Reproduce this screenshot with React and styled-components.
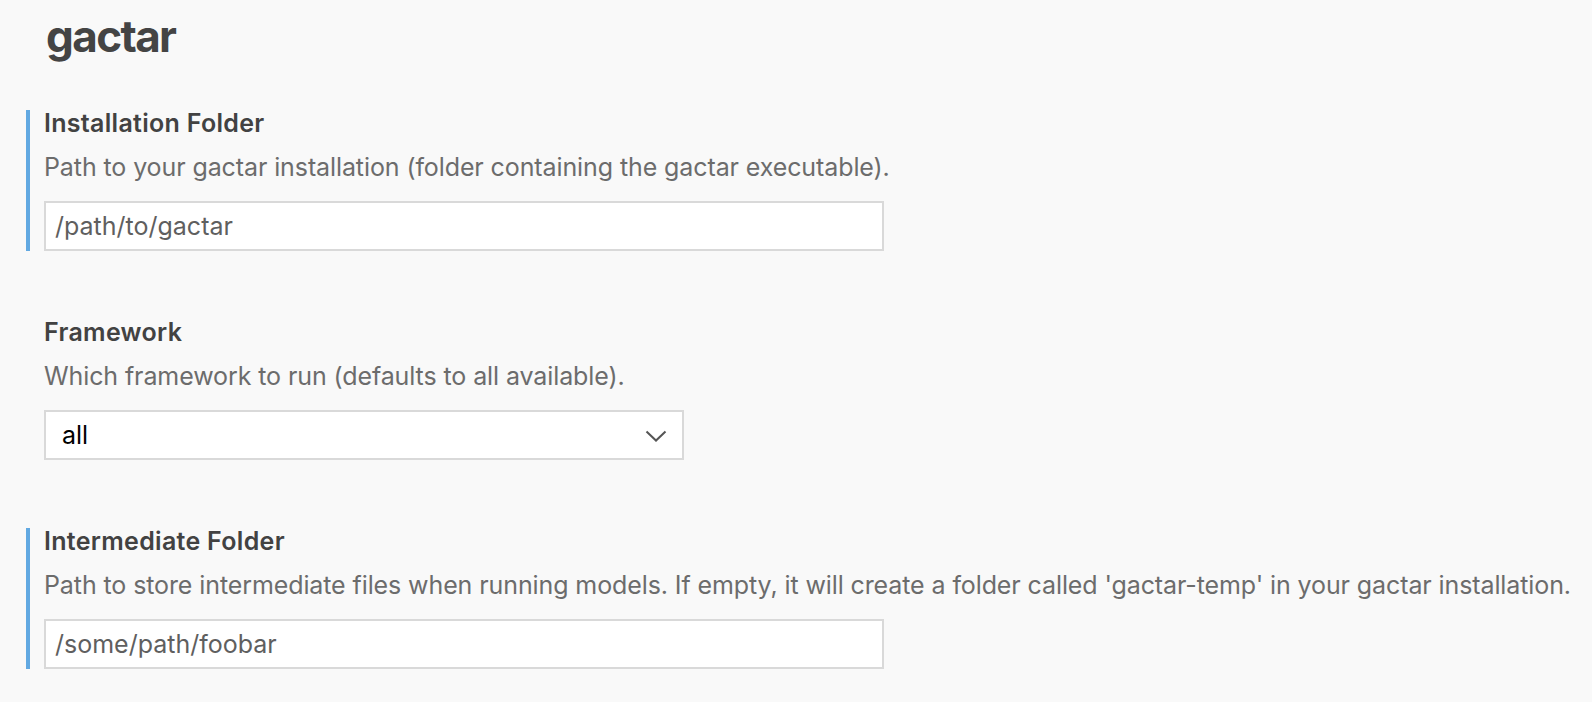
import React from "react";
import styled, { createGlobalStyle } from "styled-components";

const Global = createGlobalStyle`
  html, body { margin: 0; padding: 0; background: #f9f9f9; }
  body { font-family: Inter, "Noto Sans", "Liberation Sans", sans-serif; -webkit-font-smoothing: antialiased; }
  * { box-sizing: border-box; }
`;

const Page = styled.div`
  display: flex;
  flex-direction: column;
  padding: 10px 0 16px 26px;
`;

const Title = styled.h1`
  margin: 0 0 48px 20px;
  font-size: 44px;
  line-height: 52px;
  font-weight: 700;
  color: #444444;
  letter-spacing: -1.6px;
`;

const Setting = styled.section`
  display: flex;
  flex-direction: column;
  align-items: flex-start;
  border-left: 4px solid ${(p) => (p.$modified ? "#62a9e2" : "transparent")};
  padding-left: 14px;

  & + & {
    margin-top: 68px;
  }
`;

const Label = styled.div`
  font-size: 25px;
  line-height: 26px;
  font-weight: 600;
  letter-spacing: 0.3px;
  color: #424242;
`;

const Description = styled.div`
  margin-top: 18px;
  font-size: 25px;
  line-height: 26px;
  font-weight: 400;
  letter-spacing: -0.1px;
  color: #6c6c6c;
`;

const TextInput = styled.input`
  margin-top: 21px;
  width: ${(p) => p.$width}px;
  height: 50px;
  border: 2px solid #d9d9d9;
  background: #ffffff;
  padding: 0 9px;
  font-family: inherit;
  font-size: 25px;
  color: #5f5f5f;
  outline: none;
`;

const SelectWrap = styled.div`
  position: relative;
  margin-top: 21px;
  width: ${(p) => p.$width}px;
  height: 50px;
`;

const Select = styled.select`
  appearance: none;
  -webkit-appearance: none;
  width: 100%;
  height: 100%;
  border: 2px solid #d9d9d9;
  border-radius: 0;
  background: #ffffff;
  padding: 0 16px;
  font-family: inherit;
  font-size: 25px;
  color: #000000;
  outline: none;
`;

const Chevron = styled.svg`
  position: absolute;
  right: 17px;
  top: 20px;
  pointer-events: none;
`;

export default function App() {
  return (
    <>
      <Global />
      <Page>
        <Title>gactar</Title>
        <Setting $modified>
          <Label>Installation Folder</Label>
          <Description>
            Path to your gactar installation (folder containing the gactar executable).
          </Description>
          <TextInput $width={840} defaultValue="/path/to/gactar" />
        </Setting>
        <Setting>
          <Label>Framework</Label>
          <Description>Which framework to run (defaults to all available).</Description>
          <SelectWrap $width={640}>
            <Select defaultValue="all">
              <option value="all">all</option>
            </Select>
            <Chevron width="22" height="12" viewBox="0 0 22 12">
              <path d="M1.5 1.5 L11 10.5 L20.5 1.5" fill="none" stroke="#555" strokeWidth="2" />
            </Chevron>
          </SelectWrap>
        </Setting>
        <Setting $modified>
          <Label>Intermediate Folder</Label>
          <Description>
            Path to store intermediate files when running models. If empty, it will create a folder called 'gactar-temp' in your gactar installation.
          </Description>
          <TextInput $width={840} defaultValue="/some/path/foobar" />
        </Setting>
      </Page>
    </>
  );
}
